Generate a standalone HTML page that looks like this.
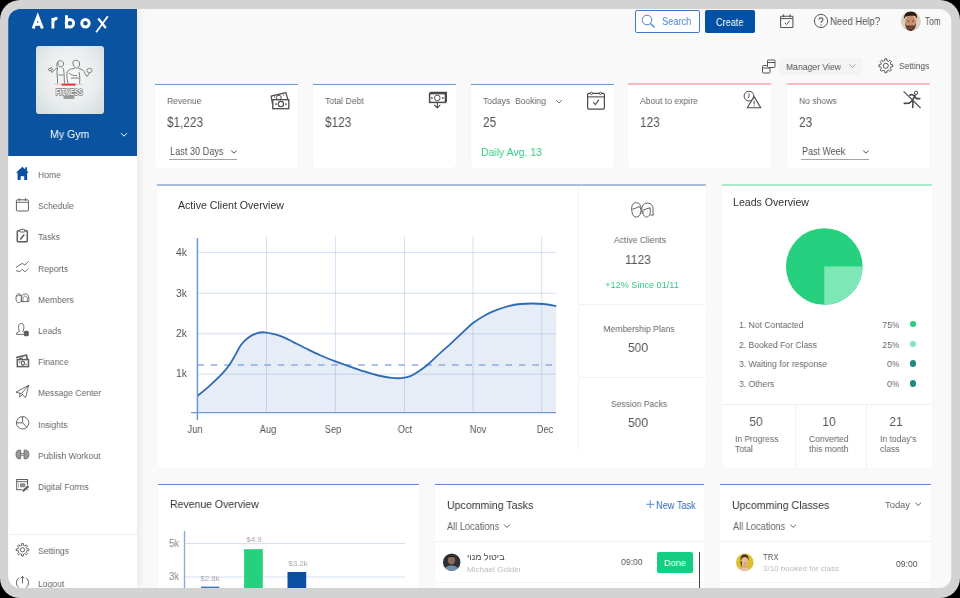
<!DOCTYPE html>
<html><head><meta charset="utf-8"><title>Arbox Dashboard</title>
<style>
html,body{margin:0;padding:0;}
body{width:960px;height:598px;overflow:hidden;background:#000;position:relative;font-family:"Liberation Sans",sans-serif;}
.frame{position:absolute;left:0;top:0;width:960px;height:598px;background:#d3d3d3;border-radius:20px;}
.app{position:absolute;left:0;top:0;width:960px;height:598px;clip-path:inset(9px 8.75px 9.9px 8.2px round 12px);background:#f9f9f9;}
.t{position:absolute;line-height:1;white-space:nowrap;will-change:transform;}
svg{overflow:visible;}
</style></head><body>
<div class="frame"></div>
<div class="app">
<div style="position:absolute;left:8px;top:8px;width:128.7px;height:580px;background:#fff;box-shadow:2px 0 8px rgba(0,0,0,0.075);"></div>
<div style="position:absolute;left:8px;top:8px;width:128.8px;height:148px;background:#0a53a0;"></div>
<svg style="position:absolute;left:0;top:0" width="960" height="598" viewBox="0 0 960 598" fill="none"><path d="M33.1 28.6 L37.75 16.4 L42.4 28.6 M34.8 24.3 H40.7" stroke="#fff" stroke-width="2.9" stroke-linejoin="miter"/><path d="M52.9 28.6 V18 M52.9 21.8 C53.6 19 55.5 18.3 57.4 18.5" stroke="#fff" stroke-width="2.9"/><path d="M66.5 15.3 V28.6" stroke="#fff" stroke-width="2.9"/><circle cx="69.9" cy="23.3" r="3.75" stroke="#fff" stroke-width="2.9"/><circle cx="85.45" cy="23.3" r="3.75" stroke="#fff" stroke-width="2.9"/><path d="M98.3 18.5 L105.8 28" stroke="#fff" stroke-width="2.3"/><path d="M107.8 16.2 L96.2 32.2" stroke="#fff" stroke-width="1.8"/></svg>
<div style="position:absolute;left:36px;top:46px;width:68px;height:68px;background:radial-gradient(ellipse at 50% 45%, #f9fafa 0%, #e9eded 55%, #d2dadc 100%);border-radius:3px;"></div>
<svg style="position:absolute;left:0;top:0" width="960" height="598" viewBox="0 0 960 598" fill="none">
      <path d="M58 61.5 C60 60 63 60.5 63.5 63 C64 65.5 62.5 67 61 67 C59 67 57.5 65 58 61.5 Z" stroke="#6e6e6e" stroke-width="0.9"/>
      <path d="M58 62 C56.5 63 56.5 66 57.5 67.5" stroke="#6e6e6e" stroke-width="0.9"/>
      <path d="M57.5 68 C55 69 53 71 52 72.5 L50.5 70 M57.5 68 C56 73 58 77 57.5 83.5 M63 68 C64.5 71 64 77 64.5 83.5 M58.5 75 H63.5" stroke="#6e6e6e" stroke-width="0.9"/>
      <path d="M48.5 69 l3 -1.5 l1 2 l-3 1.5 Z" stroke="#6e6e6e" stroke-width="0.9"/>
      <path d="M73 61.5 C75 59.5 79 60 79.5 63 C80 66 78.5 68 76.5 68 C74.5 68 72.5 65 73 61.5 Z" stroke="#6e6e6e" stroke-width="0.9"/>
      <path d="M74.5 68.5 C70 69 67.5 70 67 73 C66.5 77 67.5 80 68 83.5 M78.5 68.5 C82 69 84.5 71 85 73.5 L87 76.5 L89.5 73 M69 73 C71 75 74 76 77 75.5 M71 78 H79 M79 72 C80 76 80 80 79.5 83.5" stroke="#6e6e6e" stroke-width="0.9"/>
      <ellipse cx="89.5" cy="70.5" rx="2.6" ry="2.2" stroke="#6e6e6e" stroke-width="0.8"/>
      <path d="M54 84.3 H62.5 M74.5 84.3 H83" stroke="#e9a0a0" stroke-width="0.6"/>
      <rect x="61.7" y="83.6" width="13.9" height="2" fill="#d9313a"/>
      <text x="69.2" y="95" font-family="Liberation Sans" font-size="9.6" font-weight="700" fill="#f2f2f2" stroke="#808080" stroke-width="1.6" paint-order="stroke" text-anchor="middle" textLength="27" lengthAdjust="spacingAndGlyphs">FITNESS</text>
      <rect x="63.5" y="95.9" width="10.9" height="3" fill="#9a9a9a"/></svg>
<div class="t" style="left:50.00px;top:128.67px;font-size:11.02px;color:#fff;transform:scaleX(0.9615);transform-origin:0 0;">My Gym</div>
<svg style="position:absolute;left:119.5px;top:131.8px;" width="8" height="6" viewBox="0 0 8 6" fill="none"><path d="M1 1.2 L4 4.2 L7 1.2" stroke="#fff" stroke-width="1"/></svg>
<div class="t" style="left:38.20px;top:170.05px;font-size:9.63px;color:#666;transform:scaleX(0.8929);transform-origin:0 0;">Home</div>
<div class="t" style="left:38.20px;top:201.25px;font-size:9.63px;color:#666;transform:scaleX(0.8929);transform-origin:0 0;">Schedule</div>
<div class="t" style="left:38.20px;top:232.45px;font-size:9.63px;color:#666;transform:scaleX(0.8929);transform-origin:0 0;">Tasks</div>
<div class="t" style="left:38.20px;top:263.65px;font-size:9.63px;color:#666;transform:scaleX(0.8929);transform-origin:0 0;">Reports</div>
<div class="t" style="left:38.20px;top:294.85px;font-size:9.63px;color:#666;transform:scaleX(0.8929);transform-origin:0 0;">Members</div>
<div class="t" style="left:38.20px;top:326.05px;font-size:9.63px;color:#666;transform:scaleX(0.8929);transform-origin:0 0;">Leads</div>
<div class="t" style="left:38.20px;top:357.25px;font-size:9.63px;color:#666;transform:scaleX(0.8929);transform-origin:0 0;">Finance</div>
<div class="t" style="left:38.20px;top:388.45px;font-size:9.63px;color:#666;transform:scaleX(0.8929);transform-origin:0 0;">Message Center</div>
<div class="t" style="left:38.20px;top:419.65px;font-size:9.63px;color:#666;transform:scaleX(0.8929);transform-origin:0 0;">Insights</div>
<div class="t" style="left:38.20px;top:450.85px;font-size:9.63px;color:#666;transform:scaleX(0.8929);transform-origin:0 0;">Publish Workout</div>
<div class="t" style="left:38.20px;top:482.05px;font-size:9.63px;color:#666;transform:scaleX(0.8929);transform-origin:0 0;">Digital Forms</div>
<div style="position:absolute;left:8px;top:534px;width:129px;height:1px;background:#f1f1f1;"></div>
<div class="t" style="left:38.20px;top:546.25px;font-size:9.63px;color:#666;transform:scaleX(0.8929);transform-origin:0 0;">Settings</div>
<div class="t" style="left:38.20px;top:579.45px;font-size:9.63px;color:#666;transform:scaleX(0.8929);transform-origin:0 0;">Logout</div>
<svg style="position:absolute;left:0;top:0" width="960" height="598" viewBox="0 0 960 598" fill="none"><path d="M22.4 166.7 L15.9 172.8 L17.6 172.8 L17.6 180.1 L20.6 180.1 L20.6 176.2 L24.2 176.2 L24.2 180.1 L27.2 180.1 L27.2 172.8 L28.9 172.8 Z" fill="#0b4fa3"/><rect x="25.2" y="167.3" width="1.8" height="3.5" fill="#0b4fa3"/><rect x="16.4" y="199.8" width="12" height="11.2" rx="0.8" stroke="#5e5e5e" stroke-width="1"/><path d="M16.4 202.3 H28.4" stroke="#5e5e5e" stroke-width="0.9"/><path d="M19.3 198.3 V201 M25.5 198.3 V201" stroke="#5e5e5e" stroke-width="1"/><rect x="17.3" y="230.8" width="10" height="11" rx="0.8" stroke="#5e5e5e" stroke-width="1.5"/><rect x="19.8" y="229.4" width="5" height="2.6" rx="0.5" fill="#fff" stroke="#5e5e5e" stroke-width="1"/><path d="M20.3 239.5 L24.3 234.5" stroke="#5e5e5e" stroke-width="1.5"/><path d="M16 267.4 L22.2 263.4 L24.9 265 L28.5 261.4" stroke="#5e5e5e" stroke-width="0.9" stroke-linejoin="round"/><path d="M16 270.7 L20 271.5 L22.2 269.3 L24.9 271.9 L28.5 268.4" stroke="#5e5e5e" stroke-width="0.9" stroke-linejoin="round"/><ellipse cx="18.7" cy="298.2" rx="2.7" ry="4.4" stroke="#5e5e5e" stroke-width="0.9"/><path d="M16.3 296.5 Q18 294.8 21.2 295.5" stroke="#5e5e5e" stroke-width="0.8"/><path d="M21.5 301.6 C21.2 296 22.2 293.9 25.4 293.9 C28.5 293.9 29.1 296.5 28.8 301.6 Z" stroke="#5e5e5e" stroke-width="0.9"/><path d="M23.2 302.3 C22.5 298 23.2 296.2 25.3 296 C27.3 296.2 27.8 298.5 27.2 301.6" stroke="#5e5e5e" stroke-width="0.8"/><path d="M19.5 331.3 C18 328 18 323.4 21.2 323.4 C24.5 323.4 24.3 328 23 331.3 L23.6 332 M19.5 331.3 L16.5 333.2 L16.5 334.4 L23.8 334.4" stroke="#5e5e5e" stroke-width="0.9" stroke-linejoin="round"/><rect x="23.8" y="330.8" width="5" height="5.5" rx="1.5" fill="#5e5e5e"/><path d="M16.2 357.6 L26.5 355 L27.3 359.5" stroke="#5e5e5e" stroke-width="1.6" stroke-linejoin="round"/><rect x="17.3" y="359.6" width="11.2" height="7" stroke="#5e5e5e" stroke-width="1.5"/><ellipse cx="22.9" cy="363.1" rx="1.6" ry="2" stroke="#5e5e5e" stroke-width="1.2"/><circle cx="19.7" cy="362" r="0.8" fill="#5e5e5e"/><circle cx="26.1" cy="364.2" r="0.8" fill="#5e5e5e"/><path d="M19 358.8 L23 357.8" stroke="#5e5e5e" stroke-width="1"/><path d="M16 392.2 L28.7 385.2 L25.5 397.7 L21.5 393.6 Z" stroke="#5e5e5e" stroke-width="0.9" stroke-linejoin="round"/><path d="M21.5 393.6 L28.7 385.2 M20 393.3 L19.6 396.9 L22.5 394.6" stroke="#5e5e5e" stroke-width="0.9" stroke-linejoin="round"/><circle cx="22.6" cy="422.8" r="6.2" stroke="#5e5e5e" stroke-width="0.95"/><path d="M22.6 416.6 V422.8 H16.4 M22.6 422.8 L26.8 427.2" stroke="#5e5e5e" stroke-width="0.95"/><path d="M18.2 450.2 C16.5 451.2 16 452.5 16 454.45 C16 456.4 16.5 457.7 18.2 458.7 L20.6 458.7 L20.6 450.2 Z" fill="#9a9a9a" stroke="#5e5e5e" stroke-width="0.8"/><path d="M26.7 450.2 C28.4 451.2 28.9 452.5 28.9 454.45 C28.9 456.4 28.4 457.7 26.7 458.7 L24.1 458.7 L24.1 450.2 Z" fill="#9a9a9a" stroke="#5e5e5e" stroke-width="0.8"/><path d="M20.6 453.6 H24.1 M20.6 455.3 H24.1" stroke="#5e5e5e" stroke-width="0.8"/><rect x="16.7" y="479.5" width="10.8" height="10.2" stroke="#5e5e5e" stroke-width="1"/><path d="M16.7 481.6 H27.5" stroke="#5e5e5e" stroke-width="0.9"/><rect x="20" y="483.3" width="5.3" height="4" fill="#8a8a8a"/><path d="M18.6 483.3 V487.3" stroke="#999" stroke-width="0.8"/><path d="M22.8 491.3 L28.4 486.1" stroke="#fff" stroke-width="3.6"/><path d="M22.8 491.3 L28.4 486.1" stroke="#5e5e5e" stroke-width="2.2"/><path d="M26.79 548.84 L28.74 548.92 L28.74 550.68 L26.79 550.76 L26.57 551.48 L26.22 552.16 L27.53 553.59 L26.29 554.83 L24.86 553.52 L24.18 553.87 L23.46 554.09 L23.38 556.04 L21.62 556.04 L21.54 554.09 L20.82 553.87 L20.14 553.52 L18.71 554.83 L17.47 553.59 L18.78 552.16 L18.43 551.48 L18.21 550.76 L16.26 550.68 L16.26 548.92 L18.21 548.84 L18.43 548.12 L18.78 547.44 L17.47 546.01 L18.71 544.77 L20.14 546.08 L20.82 545.73 L21.54 545.51 L21.62 543.56 L23.38 543.56 L23.46 545.51 L24.18 545.73 L24.86 546.08 L26.29 544.77 L27.53 546.01 L26.22 547.44 L26.57 548.12 Z" stroke="#5e5e5e" stroke-width="0.95" stroke-linejoin="round"/><circle cx="22.5" cy="549.8" r="2.1" stroke="#5e5e5e" stroke-width="0.95"/><path d="M18.8 577.8 A6.2 6.2 0 0 0 18.8 587.6 M26.2 577.8 A6.2 6.2 0 0 1 26.2 587.6" stroke="#5e5e5e" stroke-width="0.95"/><path d="M22.5 583.3 V576.6 M20.8 578.3 L22.5 576.3 L24.2 578.3" stroke="#5e5e5e" stroke-width="0.95"/></svg>
<div style="position:absolute;left:635px;top:10px;width:65px;height:23px;box-sizing:border-box;border:1px solid #3f7ac6;border-radius:2px;background:#fff;"></div>
<svg style="position:absolute;left:641px;top:14px;" width="15" height="15" viewBox="0 0 15 15" fill="none"><circle cx="6" cy="6" r="4.8" stroke="#4a83cc" stroke-width="1"/><path d="M9.5 9.5 L13.5 13.5" stroke="#4a83cc" stroke-width="1.2"/></svg>
<div class="t" style="left:661.80px;top:16.49px;font-size:11px;color:#4a83cc;transform:scaleX(0.84);transform-origin:0 0;">Search</div>
<div style="position:absolute;left:705px;top:10px;width:50px;height:23px;background:#0152a6;border-radius:2px;"></div>
<div class="t" style="left:716.40px;top:17.90px;font-size:10.4px;color:#fff;transform:scaleX(0.88);transform-origin:0 0;">Create</div>
<svg style="position:absolute;left:779px;top:13px;" width="16" height="16" viewBox="0 0 16 16" fill="none"><rect x="1.6" y="3.3" width="12.3" height="11.2" rx="0.6" stroke="#555" stroke-width="1.05"/><path d="M1.6 5.6 H13.9" stroke="#555" stroke-width="1"/><path d="M4.5 1.4 V4.2 M11 1.4 V4.2" stroke="#555" stroke-width="1.3"/><path d="M5.8 9.8 L7.6 11.6 L10.6 7.8" stroke="#555" stroke-width="1"/></svg>
<svg style="position:absolute;left:813.6px;top:14.3px;" width="15" height="15" viewBox="0 0 15 15" fill="none"><circle cx="7" cy="7" r="6.6" stroke="#555" stroke-width="1"/><path d="M5 5.6 C5 3.3 9 3.3 9 5.6 C9 7.1 7 7.1 7 8.9" stroke="#555" stroke-width="1.1"/><circle cx="7" cy="10.9" r="0.7" fill="#555"/></svg>
<div class="t" style="left:829.90px;top:17.05px;font-size:10.1px;color:#555;transform:scaleX(0.94);transform-origin:0 0;">Need Help?</div>
<svg style="position:absolute;left:0;top:0" width="960" height="598" viewBox="0 0 960 598" fill="none"><defs><clipPath id="avc"><circle cx="910.8" cy="21.2" r="10"/></clipPath></defs>
    <g clip-path="url(#avc)">
      <rect x="900" y="11" width="22" height="21" fill="#dccfba"/>
      <ellipse cx="910.6" cy="22.8" rx="5.6" ry="7.6" fill="#c99072"/>
      <path d="M904.2 19.5 C903.5 13.5 907 11.6 910.6 11.6 C915 11.6 917.8 13.8 917 19.5 C916.3 17 915.5 16 913.5 15.8 C911 15.6 908 15.8 906 16.5 C905 17 904.6 18 904.2 19.5 Z" fill="#2b1e18"/>
      <path d="M905.2 23 C905.5 28.5 907.5 31 910.6 31 C913.7 31 915.8 28.5 916 23 C915 25.5 914 26 912.5 25.6 C911.2 25.3 910 25.3 908.7 25.6 C907.2 26 906 25.5 905.2 23 Z" fill="#5b3d30"/>
      <ellipse cx="908.3" cy="21" rx="1" ry="0.6" fill="#3a2a22"/><ellipse cx="913" cy="21" rx="1" ry="0.6" fill="#3a2a22"/>
      <ellipse cx="910.6" cy="27.6" rx="1.6" ry="0.7" fill="#8f5a50"/>
    </g></svg>
<div class="t" style="left:924.60px;top:16.50px;font-size:10.4px;color:#555;transform:scaleX(0.8);transform-origin:0 0;">Tom</div>
<svg style="position:absolute;left:761px;top:57.7px;" width="16" height="17" viewBox="0 0 16 17" fill="none"><rect x="1.5" y="7.5" width="7.5" height="7.5" rx="0.8" stroke="#555" stroke-width="1"/><path d="M1.5 10 H9" stroke="#555" stroke-width="1"/><rect x="6.5" y="2" width="7.5" height="7.5" rx="0.8" stroke="#555" stroke-width="1" fill="#f9f9f9"/><path d="M6.5 4.5 H14" stroke="#555" stroke-width="1"/></svg>
<div style="position:absolute;left:779px;top:58px;width:83px;height:16.5px;background:#f4f4f4;border-radius:2px;"></div>
<div class="t" style="left:785.50px;top:61.99px;font-size:9.46px;color:#555;transform:scaleX(0.9091);transform-origin:0 0;">Manager View</div>
<svg style="position:absolute;left:848px;top:63px;" width="9" height="7" viewBox="0 0 9 7" fill="none"><path d="M1.5 1.5 L4.5 4.5 L7.5 1.5" stroke="#999" stroke-width="0.9"/></svg>
<svg style="position:absolute;left:878px;top:58px;" width="16" height="16" viewBox="0 0 16 16" fill="none"><path d="M12.87 6.67 L14.73 6.82 L14.73 8.78 L12.87 8.93 L12.60 9.79 L12.19 10.59 L13.39 12.01 L12.01 13.39 L10.59 12.19 L9.79 12.60 L8.93 12.87 L8.78 14.73 L6.82 14.73 L6.67 12.87 L5.81 12.60 L5.01 12.19 L3.59 13.39 L2.21 12.01 L3.41 10.59 L3.00 9.79 L2.73 8.93 L0.87 8.78 L0.87 6.82 L2.73 6.67 L3.00 5.81 L3.41 5.01 L2.21 3.59 L3.59 2.21 L5.01 3.41 L5.81 3.00 L6.67 2.73 L6.82 0.87 L8.78 0.87 L8.93 2.73 L9.79 3.00 L10.59 3.41 L12.01 2.21 L13.39 3.59 L12.19 5.01 L12.60 5.81 Z" stroke="#555" stroke-width="1" stroke-linejoin="round"/><circle cx="7.8" cy="7.8" r="2.5" stroke="#555" stroke-width="1"/></svg>
<div class="t" style="left:899.40px;top:61.88px;font-size:9.24px;color:#555;transform:scaleX(0.9091);transform-origin:0 0;">Settings</div>
<div style="position:absolute;left:155.2px;top:84px;width:142.90px;height:84px;background:#fff;border-top:1.4px solid #6b9bd3;box-sizing:border-box;border-radius:0 0 4px 4px;box-shadow:0 0 1.5px rgba(0,0,0,0.07);"></div>
<div style="position:absolute;left:313px;top:84px;width:143.30px;height:84px;background:#fff;border-top:1.4px solid #6b9bd3;box-sizing:border-box;border-radius:0 0 4px 4px;box-shadow:0 0 1.5px rgba(0,0,0,0.07);"></div>
<div style="position:absolute;left:471.3px;top:84px;width:143.20px;height:84px;background:#fff;border-top:1.4px solid #6b9bd3;box-sizing:border-box;border-radius:0 0 4px 4px;box-shadow:0 0 1.5px rgba(0,0,0,0.07);"></div>
<div style="position:absolute;left:628px;top:83px;width:143.00px;height:85px;background:#fff;border-top:2px solid #f6bcc2;box-sizing:border-box;border-radius:0 0 4px 4px;box-shadow:0 0 1.5px rgba(0,0,0,0.07);"></div>
<div style="position:absolute;left:787.3px;top:83px;width:142.90px;height:85px;background:#fff;border-top:2px solid #f6bcc2;box-sizing:border-box;border-radius:0 0 4px 4px;box-shadow:0 0 1.5px rgba(0,0,0,0.07);"></div>
<div class="t" style="left:166.70px;top:96.29px;font-size:9.46px;color:#666;transform:scaleX(0.9091);transform-origin:0 0;">Revenue</div>
<div class="t" style="left:324.50px;top:96.29px;font-size:9.46px;color:#666;transform:scaleX(0.9091);transform-origin:0 0;">Total Debt</div>
<div class="t" style="left:482.80px;top:96.29px;font-size:9.46px;color:#666;transform:scaleX(0.9091);transform-origin:0 0;">Todays&nbsp; Booking</div>
<div class="t" style="left:639.50px;top:95.69px;font-size:9.46px;color:#666;transform:scaleX(0.9091);transform-origin:0 0;">About to expire</div>
<div class="t" style="left:798.80px;top:95.69px;font-size:9.46px;color:#666;transform:scaleX(0.9091);transform-origin:0 0;">No shows</div>
<div class="t" style="left:166.70px;top:115.82px;font-size:13.92px;color:#555;transform:scaleX(0.8475);transform-origin:0 0;">$1,223</div>
<div class="t" style="left:324.50px;top:115.82px;font-size:13.92px;color:#555;transform:scaleX(0.8475);transform-origin:0 0;">$123</div>
<div class="t" style="left:482.80px;top:115.82px;font-size:13.92px;color:#555;transform:scaleX(0.8475);transform-origin:0 0;">25</div>
<div class="t" style="left:639.50px;top:115.82px;font-size:13.92px;color:#555;transform:scaleX(0.8475);transform-origin:0 0;">123</div>
<div class="t" style="left:798.80px;top:115.82px;font-size:13.92px;color:#555;transform:scaleX(0.8475);transform-origin:0 0;">23</div>
<div class="t" style="left:169.50px;top:146.25px;font-size:11.04px;color:#555;transform:scaleX(0.8333);transform-origin:0 0;">Last 30 Days</div>
<svg style="position:absolute;left:229.5px;top:149px;" width="8" height="6" viewBox="0 0 8 6" fill="none"><path d="M1.2 1.5 L4 4.2 L6.8 1.5" stroke="#555" stroke-width="1"/></svg>
<div style="position:absolute;left:169px;top:158.7px;width:68px;height:1.4000000000000057px;background:#a5a5a5;"></div>
<div class="t" style="left:801.50px;top:146.46px;font-size:10.8px;color:#555;transform:scaleX(0.8333);transform-origin:0 0;">Past Week</div>
<svg style="position:absolute;left:861.8px;top:149px;" width="8" height="6" viewBox="0 0 8 6" fill="none"><path d="M1.2 1.5 L4 4.2 L6.8 1.5" stroke="#555" stroke-width="1"/></svg>
<div style="position:absolute;left:801px;top:158.7px;width:68px;height:1.4000000000000057px;background:#a5a5a5;"></div>
<svg style="position:absolute;left:555px;top:98px;" width="8" height="7" viewBox="0 0 8 7" fill="none"><path d="M1 2 L4 5 L7 2" stroke="#666" stroke-width="0.9"/></svg>
<div class="t" style="left:481.00px;top:147.05px;font-size:10.81px;color:#2ecc85;transform:scaleX(0.9709);transform-origin:0 0;">Daily Avg. 13</div>
<svg style="position:absolute;left:0;top:0" width="960" height="598" viewBox="0 0 960 598" fill="none"><path d="M272.6 104.5 L271.1 96.2 L285.8 92.6 L287.9 99.6" stroke="#4a4a4a" stroke-width="1.2" stroke-linejoin="round"/><circle cx="278.8" cy="97.6" r="2.4" stroke="#4a4a4a" stroke-width="1"/><path d="M274.4 96.5 l0.4 1.2 M283.5 94.5 l0.3 1.2" stroke="#4a4a4a" stroke-width="1"/><rect x="272.8" y="99.7" width="16" height="9" fill="#fff" stroke="#4a4a4a" stroke-width="1.3"/><circle cx="280.9" cy="104.1" r="2.7" stroke="#4a4a4a" stroke-width="1.1"/><circle cx="276" cy="104.1" r="0.9" fill="#4a4a4a"/><circle cx="285.9" cy="104.1" r="0.9" fill="#4a4a4a"/><path d="M429.6 93.5 L430.8 92.3 H446.4 V101.5 L445.2 102.5" stroke="#4a4a4a" stroke-width="1.2"/><rect x="429.6" y="93.6" width="15.8" height="8.8" stroke="#4a4a4a" stroke-width="1.5"/><circle cx="437.3" cy="97.9" r="2.8" stroke="#4a4a4a" stroke-width="1"/><circle cx="431.9" cy="97.9" r="0.9" fill="#4a4a4a"/><circle cx="442.8" cy="97.9" r="0.9" fill="#4a4a4a"/><path d="M437.3 102.5 V108 M434.3 104.9 L437.3 108 L440.3 104.9" stroke="#4a4a4a" stroke-width="1.1"/><rect x="587.6" y="93.3" width="16.8" height="15.8" rx="1.2" stroke="#4a4a4a" stroke-width="1.2"/><path d="M587.6 96.9 H604.4" stroke="#4a4a4a" stroke-width="1.1"/><circle cx="591.4" cy="93.4" r="1.1" fill="#fff" stroke="#4a4a4a" stroke-width="1"/><circle cx="600.4" cy="93.4" r="1.1" fill="#fff" stroke="#4a4a4a" stroke-width="1"/><path d="M593.2 102.4 L595.5 104.6 L598.9 99.6" stroke="#4a4a4a" stroke-width="1.1"/><circle cx="749" cy="96.1" r="4.9" stroke="#4a4a4a" stroke-width="1"/><path d="M749 93.3 V97.2 L747.6 97.9" stroke="#4a4a4a" stroke-width="0.9"/><path d="M754.1 96.6 L760.8 107.7 H747.2 Z" fill="#fff" stroke="#4a4a4a" stroke-width="1.1" stroke-linejoin="round"/><path d="M754.1 100.8 V104.5" stroke="#4a4a4a" stroke-width="1"/><circle cx="754.1" cy="105.9" r="0.55" fill="#4a4a4a"/><circle cx="916" cy="92.8" r="1.7" stroke="#4a4a4a" stroke-width="1"/><path d="M915.2 95.5 L912.2 100.5 L913 103 L912.7 107.5 M914.6 96.5 L916.5 98.6 L919.8 98.6 M914 95.5 L911.5 94.5 L909.8 95.2 M912.2 100.5 L909 103.3 L904.3 103.4" stroke="#4a4a4a" stroke-width="1.6" stroke-linejoin="round" stroke-linecap="round"/><path d="M903.6 91.4 L920.6 108" stroke="#4a4a4a" stroke-width="1.1"/></svg>
<div style="position:absolute;left:157px;top:184px;width:549px;height:284px;background:#fff;border-top:2px solid #a7c0de;box-sizing:border-box;border-radius:0 0 5px 5px;box-shadow:0 0 1.5px rgba(0,0,0,0.05);"></div>
<div class="t" style="left:178.00px;top:200.03px;font-size:10.6px;color:#333;">Active Client Overview</div>
<svg style="position:absolute;left:0;top:0" width="960" height="598" viewBox="0 0 960 598" fill="none"><path d="M197.40 396.00 C199.23 394.48 204.35 390.53 208.40 386.90 C212.45 383.27 218.25 377.82 221.70 374.20 C225.15 370.58 226.87 368.33 229.10 365.20 C231.33 362.07 233.10 358.82 235.10 355.40 C237.10 351.98 238.87 347.70 241.10 344.70 C243.33 341.70 245.93 339.28 248.50 337.40 C251.07 335.52 253.83 334.25 256.50 333.40 C259.17 332.55 261.38 332.13 264.50 332.30 C267.62 332.47 271.78 333.48 275.20 334.40 C278.62 335.32 281.97 336.52 285.00 337.80 C288.03 339.08 289.78 340.27 293.40 342.10 C297.02 343.93 302.25 346.62 306.70 348.80 C311.15 350.98 315.63 353.23 320.10 355.20 C324.57 357.17 329.03 358.88 333.50 360.60 C337.97 362.32 341.65 363.65 346.90 365.50 C352.15 367.35 359.75 370.03 365.00 371.70 C370.25 373.37 373.95 374.47 378.40 375.50 C382.85 376.53 387.92 377.47 391.70 377.90 C395.48 378.33 397.97 378.40 401.10 378.10 C404.23 377.80 407.60 377.20 410.50 376.10 C413.40 375.00 415.60 373.43 418.50 371.50 C421.40 369.57 424.12 367.73 427.90 364.50 C431.68 361.27 437.52 355.45 441.20 352.10 C444.88 348.75 446.58 347.53 450.00 344.40 C453.42 341.27 457.80 336.90 461.70 333.30 C465.60 329.70 469.50 325.82 473.40 322.80 C477.30 319.78 481.20 317.35 485.10 315.20 C489.00 313.05 492.90 311.42 496.80 309.90 C500.70 308.38 504.60 307.08 508.50 306.10 C512.40 305.12 516.30 304.43 520.20 304.00 C524.10 303.57 528.00 303.50 531.90 303.50 C535.80 303.50 539.53 303.57 543.60 304.00 C547.67 304.43 554.18 305.75 556.30 306.10 L556 412.7 L197.5 412.7 Z" fill="#e6edf7"/><path d="M197.5 252.4 H556" stroke="rgba(120,160,215,0.32)" stroke-width="1"/><path d="M197.5 293.3 H556" stroke="rgba(120,160,215,0.32)" stroke-width="1"/><path d="M197.5 333.8 H556" stroke="rgba(120,160,215,0.32)" stroke-width="1"/><path d="M197.5 374.2 H556" stroke="rgba(120,160,215,0.32)" stroke-width="1"/><path d="M266.5 236.5 V413" stroke="rgba(120,160,215,0.32)" stroke-width="1"/><path d="M335.4 236.5 V413" stroke="rgba(120,160,215,0.32)" stroke-width="1"/><path d="M404.5 236.5 V413" stroke="rgba(120,160,215,0.32)" stroke-width="1"/><path d="M473 236.5 V413" stroke="rgba(120,160,215,0.32)" stroke-width="1"/><path d="M541.7 236.5 V413" stroke="rgba(120,160,215,0.32)" stroke-width="1"/><path d="M197.4 365.1 H552" stroke="#8aaedb" stroke-width="1.5" stroke-dasharray="6.5 6.9"/><path d="M197.40 396.00 C199.23 394.48 204.35 390.53 208.40 386.90 C212.45 383.27 218.25 377.82 221.70 374.20 C225.15 370.58 226.87 368.33 229.10 365.20 C231.33 362.07 233.10 358.82 235.10 355.40 C237.10 351.98 238.87 347.70 241.10 344.70 C243.33 341.70 245.93 339.28 248.50 337.40 C251.07 335.52 253.83 334.25 256.50 333.40 C259.17 332.55 261.38 332.13 264.50 332.30 C267.62 332.47 271.78 333.48 275.20 334.40 C278.62 335.32 281.97 336.52 285.00 337.80 C288.03 339.08 289.78 340.27 293.40 342.10 C297.02 343.93 302.25 346.62 306.70 348.80 C311.15 350.98 315.63 353.23 320.10 355.20 C324.57 357.17 329.03 358.88 333.50 360.60 C337.97 362.32 341.65 363.65 346.90 365.50 C352.15 367.35 359.75 370.03 365.00 371.70 C370.25 373.37 373.95 374.47 378.40 375.50 C382.85 376.53 387.92 377.47 391.70 377.90 C395.48 378.33 397.97 378.40 401.10 378.10 C404.23 377.80 407.60 377.20 410.50 376.10 C413.40 375.00 415.60 373.43 418.50 371.50 C421.40 369.57 424.12 367.73 427.90 364.50 C431.68 361.27 437.52 355.45 441.20 352.10 C444.88 348.75 446.58 347.53 450.00 344.40 C453.42 341.27 457.80 336.90 461.70 333.30 C465.60 329.70 469.50 325.82 473.40 322.80 C477.30 319.78 481.20 317.35 485.10 315.20 C489.00 313.05 492.90 311.42 496.80 309.90 C500.70 308.38 504.60 307.08 508.50 306.10 C512.40 305.12 516.30 304.43 520.20 304.00 C524.10 303.57 528.00 303.50 531.90 303.50 C535.80 303.50 539.53 303.57 543.60 304.00 C547.67 304.43 554.18 305.75 556.30 306.10" stroke="#2f6ab5" stroke-width="1.8" fill="none"/><path d="M197.4 238 V420" stroke="#6f98d2" stroke-width="1.5"/><path d="M191 412.7 H556" stroke="#6f98d2" stroke-width="1.3"/></svg>
<div class="t" style="left:175.80px;top:247.60px;font-size:10.4px;color:#555;">4k</div>
<div class="t" style="left:175.80px;top:288.50px;font-size:10.4px;color:#555;">3k</div>
<div class="t" style="left:175.80px;top:329.00px;font-size:10.4px;color:#555;">2k</div>
<div class="t" style="left:175.80px;top:369.40px;font-size:10.4px;color:#555;">1k</div>
<div class="t" style="left:195.00px;top:424.88px;font-size:10.42px;color:#555;transform:translateX(-50%) scaleX(0.8929);transform-origin:50% 0;">Jun</div>
<div class="t" style="left:267.90px;top:424.88px;font-size:10.42px;color:#555;transform:translateX(-50%) scaleX(0.8929);transform-origin:50% 0;">Aug</div>
<div class="t" style="left:333.00px;top:424.88px;font-size:10.42px;color:#555;transform:translateX(-50%) scaleX(0.8929);transform-origin:50% 0;">Sep</div>
<div class="t" style="left:405.40px;top:424.88px;font-size:10.42px;color:#555;transform:translateX(-50%) scaleX(0.8929);transform-origin:50% 0;">Oct</div>
<div class="t" style="left:478.00px;top:424.88px;font-size:10.42px;color:#555;transform:translateX(-50%) scaleX(0.8929);transform-origin:50% 0;">Nov</div>
<div class="t" style="left:544.50px;top:424.88px;font-size:10.42px;color:#555;transform:translateX(-50%) scaleX(0.8929);transform-origin:50% 0;">Dec</div>
<div style="position:absolute;left:578px;top:187px;width:1px;height:263px;background:#f3f3f3;"></div>
<div style="position:absolute;left:579px;top:304px;width:127px;height:1px;background:#f3f3f3;"></div>
<div style="position:absolute;left:579px;top:377px;width:127px;height:1px;background:#f3f3f3;"></div>
<svg style="position:absolute;left:0;top:0" width="960" height="598" viewBox="0 0 960 598" fill="none"><path d="M632.2 212.8 C631 208 631.6 202.7 636.2 202.7 C640.6 202.7 641.6 207 640.7 212.3 C640.2 215.5 638.5 217 636.3 217 C634 217 632.7 215.5 632.2 212.8 Z" stroke="#555" stroke-width="0.95"/><path d="M632.3 209.2 C634.5 208.6 637.3 207.7 639.2 206.4 C639.7 207.6 640.2 208.4 640.9 209" stroke="#555" stroke-width="0.9"/><path d="M642.2 213.8 C640.8 207.5 642.6 203.1 647.2 203.1 C651.8 203.1 653.3 206.4 653 210.2 C652.8 212.6 653.3 214.3 653.6 215 H650.3" stroke="#555" stroke-width="0.95"/><path d="M642.9 210.8 C642.6 214.5 644.3 217 646.5 217 C648.7 217 650.3 214.6 650.3 211 L650 207.8 C648 208.6 645.3 209 642.9 210.3" stroke="#555" stroke-width="0.95" fill="#fff"/><circle cx="634.8" cy="211" r="0.45" fill="#aaa"/><circle cx="638" cy="211" r="0.45" fill="#aaa"/><circle cx="644.7" cy="211.3" r="0.45" fill="#aaa"/><circle cx="647.8" cy="211.3" r="0.45" fill="#aaa"/></svg>
<div class="t" style="left:640.00px;top:235.73px;font-size:9.3px;color:#666;transform:translateX(-50%) scaleX(0.925);transform-origin:50% 0;">Active Clients</div>
<div class="t" style="left:638.00px;top:253.23px;font-size:13.2px;color:#555;transform:translateX(-50%) scaleX(0.9091);transform-origin:50% 0;">1123</div>
<div class="t" style="left:642.00px;top:281.30px;font-size:9.1px;color:#34c98a;transform:translateX(-50%);">+12% Since 01/11</div>
<div class="t" style="left:638.60px;top:325.43px;font-size:9.3px;color:#666;transform:translateX(-50%) scaleX(0.925);transform-origin:50% 0;">Membership Plans</div>
<div class="t" style="left:638.00px;top:342.33px;font-size:12.72px;color:#555;transform:translateX(-50%) scaleX(0.9434);transform-origin:50% 0;">500</div>
<div class="t" style="left:638.90px;top:399.53px;font-size:9.3px;color:#666;transform:translateX(-50%) scaleX(0.925);transform-origin:50% 0;">Session Packs</div>
<div class="t" style="left:638.00px;top:416.63px;font-size:12.72px;color:#555;transform:translateX(-50%) scaleX(0.9434);transform-origin:50% 0;">500</div>
<div style="position:absolute;left:722.3px;top:184px;width:209.30000000000007px;height:284px;background:#fff;border-top:2px solid #a9e9c9;box-sizing:border-box;border-radius:0 0 5px 5px;box-shadow:0 0 1.5px rgba(0,0,0,0.05);"></div>
<div class="t" style="left:732.70px;top:196.63px;font-size:10.6px;color:#333;">Leads Overview</div>
<svg style="position:absolute;left:0;top:0" width="960" height="598" viewBox="0 0 960 598"><circle cx="824.3" cy="266.5" r="38.3" fill="#27d07f"/><path d="M824.3 266.5 H862.5999999999999 A38.3 38.3 0 0 1 824.3 304.8 Z" fill="#7de8b6"/></svg>
<div class="t" style="left:739.10px;top:320.84px;font-size:9.29px;color:#666;transform:scaleX(0.9259);transform-origin:0 0;">1. Not Contacted</div>
<div class="t" style="right:60.50px;top:320.84px;font-size:9.29px;color:#666;transform:scaleX(0.9259);transform-origin:100% 0;">75%</div>
<div style="position:absolute;left:909.60px;top:320.70px;width:6.6px;height:6.6px;border-radius:50%;background:#27d07f"></div>
<div class="t" style="left:739.10px;top:340.64px;font-size:9.29px;color:#666;transform:scaleX(0.9259);transform-origin:0 0;">2. Booked For Class</div>
<div class="t" style="right:60.50px;top:340.64px;font-size:9.29px;color:#666;transform:scaleX(0.9259);transform-origin:100% 0;">25%</div>
<div style="position:absolute;left:909.60px;top:340.50px;width:6.6px;height:6.6px;border-radius:50%;background:#7de8b6"></div>
<div class="t" style="left:739.10px;top:360.44px;font-size:9.29px;color:#666;transform:scaleX(0.9259);transform-origin:0 0;">3. Waiting for response</div>
<div class="t" style="right:60.50px;top:360.44px;font-size:9.29px;color:#666;transform:scaleX(0.9259);transform-origin:100% 0;">0%</div>
<div style="position:absolute;left:909.60px;top:360.30px;width:6.6px;height:6.6px;border-radius:50%;background:#1f8b80"></div>
<div class="t" style="left:739.10px;top:380.24px;font-size:9.29px;color:#666;transform:scaleX(0.9259);transform-origin:0 0;">3. Others</div>
<div class="t" style="right:60.50px;top:380.24px;font-size:9.29px;color:#666;transform:scaleX(0.9259);transform-origin:100% 0;">0%</div>
<div style="position:absolute;left:909.60px;top:380.10px;width:6.6px;height:6.6px;border-radius:50%;background:#1f8b80"></div>
<div style="position:absolute;left:722px;top:404px;width:209px;height:1px;background:#f0f0f0;"></div>
<div style="position:absolute;left:795px;top:405px;width:1px;height:63px;background:#f0f0f0;"></div>
<div style="position:absolute;left:866px;top:405px;width:1px;height:63px;background:#f0f0f0;"></div>
<div class="t" style="left:756.20px;top:416.13px;font-size:12.6px;color:#555;transform:translateX(-50%) scaleX(0.9524);transform-origin:50% 0;">50</div>
<div class="t" style="left:828.50px;top:416.13px;font-size:12.6px;color:#555;transform:translateX(-50%) scaleX(0.9524);transform-origin:50% 0;">10</div>
<div class="t" style="left:896.30px;top:416.13px;font-size:12.6px;color:#555;transform:translateX(-50%) scaleX(0.9524);transform-origin:50% 0;">21</div>
<div class="t" style="left:734.90px;top:434.84px;font-size:8.93px;color:#666;transform:scaleX(0.9524);transform-origin:0 0;">In Progress</div>
<div class="t" style="left:734.90px;top:444.94px;font-size:8.93px;color:#666;transform:scaleX(0.9524);transform-origin:0 0;">Total</div>
<div class="t" style="left:808.70px;top:434.76px;font-size:9.03px;color:#666;transform:scaleX(0.9524);transform-origin:0 0;">Converted</div>
<div class="t" style="left:808.70px;top:444.86px;font-size:9.03px;color:#666;transform:scaleX(0.9524);transform-origin:0 0;">this month</div>
<div class="t" style="left:879.60px;top:434.76px;font-size:9.03px;color:#666;transform:scaleX(0.9524);transform-origin:0 0;">In today's</div>
<div class="t" style="left:879.60px;top:444.86px;font-size:9.03px;color:#666;transform:scaleX(0.9524);transform-origin:0 0;">class</div>
<div style="position:absolute;left:158px;top:484px;width:261px;height:116px;background:#fff;border-top:1.5px solid #5d8fd3;box-sizing:border-box;box-shadow:0 0 1.5px rgba(0,0,0,0.05);"></div>
<div class="t" style="left:169.50px;top:499.48px;font-size:11.13px;color:#333;transform:scaleX(0.9434);transform-origin:0 0;">Revenue Overview</div>
<svg style="position:absolute;left:0;top:0" width="960" height="598" viewBox="0 0 960 598" fill="none"><path d="M184.5 543.5 H405" stroke="#d5e1f2" stroke-width="1"/><path d="M184.5 577 H405" stroke="#d5e1f2" stroke-width="1"/><path d="M184.5 531 V600" stroke="#86abdb" stroke-width="1.4"/><rect x="201" y="586.6" width="18.4" height="20" fill="#3d78c2"/><rect x="244.1" y="549.2" width="18.7" height="50" fill="#27d07f"/><rect x="287.5" y="572" width="18.7" height="30" fill="#0b4fa3"/></svg>
<div class="t" style="left:169.30px;top:538.62px;font-size:10.37px;color:#888;transform:scaleX(0.9259);transform-origin:0 0;">5k</div>
<div class="t" style="left:169.30px;top:572.22px;font-size:10.37px;color:#888;transform:scaleX(0.9259);transform-origin:0 0;">3k</div>
<div class="t" style="left:210.20px;top:574.83px;font-size:8px;color:#aaa;transform:translateX(-50%);">$2.8k</div>
<div class="t" style="left:253.50px;top:535.83px;font-size:8px;color:#aaa;transform:translateX(-50%);">$4.9</div>
<div class="t" style="left:297.50px;top:560.13px;font-size:8px;color:#aaa;transform:translateX(-50%);">$3.2k</div>
<div style="position:absolute;left:435px;top:484px;width:269px;height:116px;background:#fff;border-top:1.5px solid #5d8fd3;box-sizing:border-box;box-shadow:0 0 1.5px rgba(0,0,0,0.05);"></div>
<div class="t" style="left:447.00px;top:499.69px;font-size:11.24px;color:#333;transform:scaleX(0.9434);transform-origin:0 0;">Upcomming Tasks</div>
<svg style="position:absolute;left:645.5px;top:500px;" width="9" height="9" viewBox="0 0 9 9" fill="none"><path d="M4.2 0.3 V8.3 M0.3 4.3 H8.3" stroke="#4a80c8" stroke-width="0.9"/></svg>
<div class="t" style="left:656.10px;top:499.64px;font-size:10.58px;color:#2f6ab5;transform:scaleX(0.8696);transform-origin:0 0;">New Task</div>
<div class="t" style="left:447.00px;top:521.24px;font-size:10.58px;color:#666;transform:scaleX(0.8696);transform-origin:0 0;">All Locations</div>
<svg style="position:absolute;left:503px;top:523px;" width="9" height="7" viewBox="0 0 9 7" fill="none"><path d="M1 1.5 L4 4.5 L7 1.5" stroke="#555" stroke-width="0.95"/></svg>
<div style="position:absolute;left:435px;top:541px;width:269px;height:1px;background:#f0f0f0;"></div>
<div style="position:absolute;left:435px;top:581.5px;width:269px;height:1.0px;background:#f3f3f3;"></div>
<svg style="position:absolute;left:0;top:0" width="960" height="598" viewBox="0 0 960 598" fill="none"><defs><clipPath id="tav"><circle cx="451.7" cy="562.2" r="8.7"/></clipPath></defs>
    <g clip-path="url(#tav)"><rect x="442" y="553" width="20" height="20" fill="#2c2f33"/><ellipse cx="451.5" cy="560" rx="3.6" ry="4.4" fill="#8d6b58"/><path d="M447.5 558 C447.5 554.5 455.5 554.5 455.5 558 C454 556.8 449 556.8 447.5 558 Z" fill="#1e1a18"/><ellipse cx="451.5" cy="570" rx="7" ry="4.5" fill="#6e8fae"/></g>
</svg>
<div class="t" style="left:466.70px;top:552.98px;font-size:9px;color:#444;">ביטול מנוי</div>
<div class="t" style="left:466.70px;top:565.74px;font-size:8.1px;color:#bbb;">Michael Goldin</div>
<div class="t" style="right:317.60px;top:558.36px;font-size:9.03px;color:#555;transform:scaleX(0.9524);transform-origin:100% 0;">09:00</div>
<div style="position:absolute;left:656.5px;top:552px;width:36.5px;height:21px;background:#14cf82;border-radius:2px;"></div>
<div class="t" style="left:674.60px;top:558.19px;font-size:9.94px;color:#fff;transform:translateX(-50%) scaleX(0.9259);transform-origin:50% 0;">Done</div>
<div style="position:absolute;left:698.6px;top:551.5px;width:1.6000000000000227px;height:48.5px;background:#444;"></div>
<div style="position:absolute;left:720px;top:484px;width:211px;height:116px;background:#fff;border-top:1.5px solid #5d8fd3;box-sizing:border-box;box-shadow:0 0 1.5px rgba(0,0,0,0.05);"></div>
<div class="t" style="left:732.10px;top:499.69px;font-size:11.24px;color:#333;transform:scaleX(0.9434);transform-origin:0 0;">Upcomming Classes</div>
<div class="t" style="left:885.00px;top:499.84px;font-size:9.4px;color:#666;">Today</div>
<svg style="position:absolute;left:914px;top:501px;" width="9" height="7" viewBox="0 0 9 7" fill="none"><path d="M1.5 1.8 L4.2 4.4 L6.9 1.8" stroke="#555" stroke-width="0.95"/></svg>
<div class="t" style="left:732.70px;top:521.24px;font-size:10.58px;color:#666;transform:scaleX(0.8696);transform-origin:0 0;">All Locations</div>
<svg style="position:absolute;left:789px;top:523px;" width="9" height="7" viewBox="0 0 9 7" fill="none"><path d="M1.5 1.8 L4.2 4.4 L6.9 1.8" stroke="#555" stroke-width="0.95"/></svg>
<div style="position:absolute;left:720px;top:541px;width:211px;height:1px;background:#f0f0f0;"></div>
<div style="position:absolute;left:720px;top:581.5px;width:211px;height:1.0px;background:#f3f3f3;"></div>
<svg style="position:absolute;left:0;top:0" width="960" height="598" viewBox="0 0 960 598" fill="none"><defs><clipPath id="cav"><circle cx="744.8" cy="562.4" r="8.8"/></clipPath></defs><g clip-path="url(#cav)"><rect x="735" y="553" width="20" height="20" fill="#dcc02e"/><ellipse cx="744.8" cy="572" rx="6.5" ry="4.2" fill="#e6c3b0"/><path d="M742.6 564 V568 H747 V564 Z" fill="#d9a891"/><path d="M740.6 561 C740.2 556.5 742 554.6 744.8 554.6 C747.6 554.6 749 556.5 748.6 561 C748 558.2 746.8 557.3 744.8 557.3 C742.8 557.3 741.3 558.2 740.6 561 Z" fill="#4a3326"/><ellipse cx="744.8" cy="561" rx="2.9" ry="3.8" fill="#e8b7a0"/><path d="M740.6 561 C740.3 564 740.8 566 741.5 567 L742 561.5 Z" fill="#4a3326"/><ellipse cx="744.9" cy="563.2" rx="1" ry="0.5" fill="#d9707a"/></g></svg>
<div class="t" style="left:763.40px;top:552.04px;font-size:9.4px;color:#555;transform:scaleX(0.83);transform-origin:0 0;">TRX</div>
<div class="t" style="left:763.40px;top:565.43px;font-size:8px;color:#bbb;">3/10 booked for class</div>
<div class="t" style="right:42.00px;top:559.52px;font-size:8.6px;color:#555;">09:00</div>
</div>
</body></html>
